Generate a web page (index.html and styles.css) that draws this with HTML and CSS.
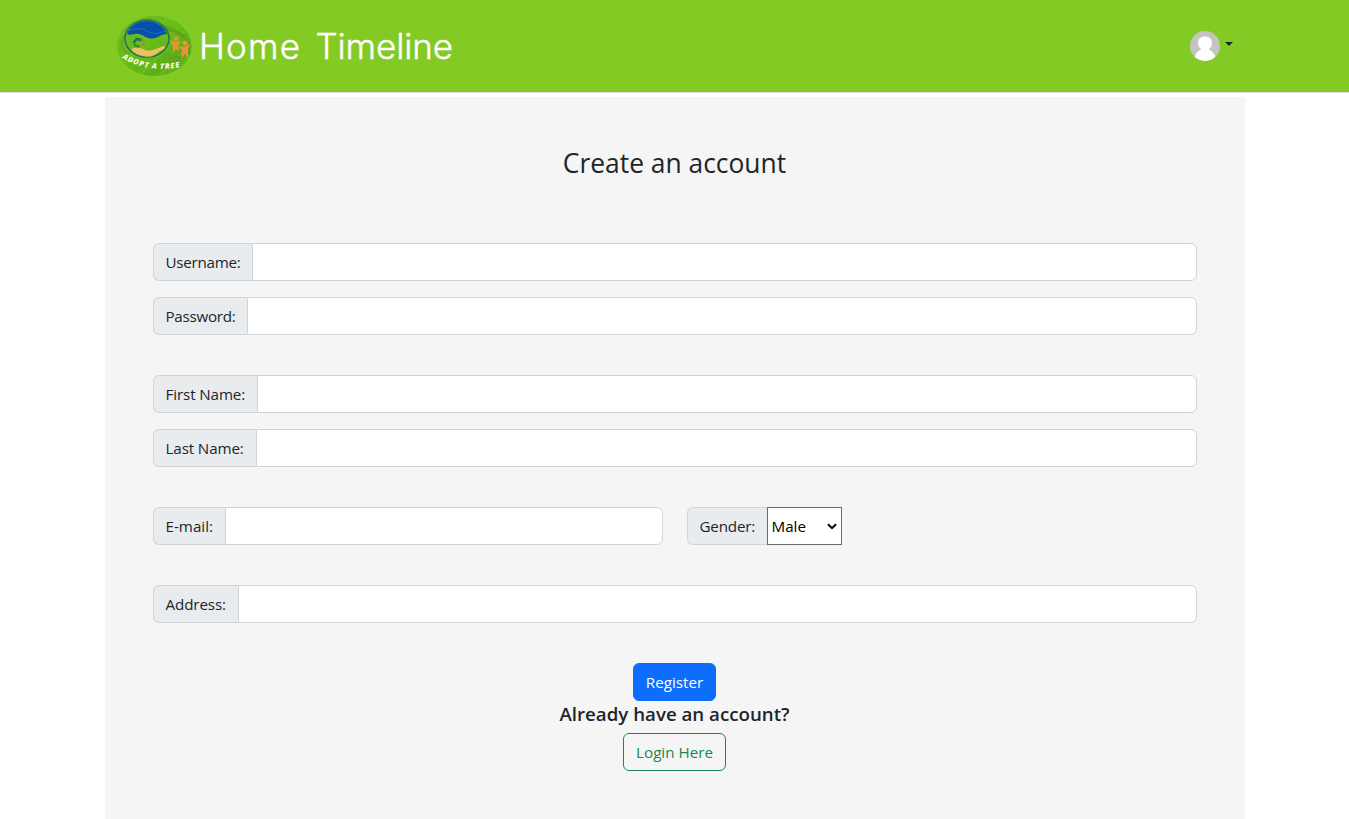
FILE: index.html
```html
<!DOCTYPE html>
<html lang="en">
<head>
<meta charset="utf-8">
<title>Create an account</title>
<link rel="stylesheet" href="styles.css">
</head>
<body>
<header class="navbar">
  <div class="nav-inner">
    <svg class="logo" width="76" height="60" viewBox="0 0 76 60" role="img" aria-label="Adopt a tree">
      <defs>
        <clipPath id="oval"><ellipse cx="37.3" cy="30" rx="37.3" ry="30"/></clipPath>
        <linearGradient id="leaf" x1="0" y1="0" x2="1" y2="1">
          <stop offset="0" stop-color="#68b82c"/><stop offset=".45" stop-color="#6abd18"/>
          <stop offset=".7" stop-color="#5cb018"/><stop offset="1" stop-color="#6abb12"/>
        </linearGradient>
        <path id="arc" d="M5 42Q32 58 65 50.500"/>
      </defs>
      <g clip-path="url(#oval)">
        <rect width="76" height="60" fill="url(#leaf)"/>
        <path d="M-2 27L25 0M-2 55L55 -2M20 62L77 5M40 62L78 24" stroke="#8bd034" stroke-width="2" opacity=".3"/>
        <path d="M48 10L68 20M45 53L75 35" stroke="#398b12" stroke-width="3" opacity=".3"/>
      </g>
      <path d="M8 18C2 28 5 35 13 38M48 13Q66 17 73 29Q72 40 52 43" fill="none" stroke="#7d8b23" stroke-width="1.2"/>
      <ellipse cx="30" cy="22.500" rx="22" ry="18.500" fill="none" stroke="#23735c" stroke-width="1.500"/>
      <path d="M10 18C13 9 21 5 30 5C40 5 48 11 50 18C43 18 41 23 34 22.500C28 22 27 19 22 18C17 17 14 20 10 18Z" fill="#064fb0"/>
      <path d="M12 15Q22 10 30 15T48 15" fill="none" stroke="#2b6b9b" stroke-width="1"/>
      <path d="M14 33.500C20 30 24 32 28 34C35 36 39 32 47 30C50 30 47 34 43 35Q35 43 26 40Q19 39 14 33.500Z" fill="#eac161"/>
      <g fill="none" stroke-width="2.500"><path d="M16.500 27l3-4 5 1" stroke="#197354"/><path d="M25.500 24l2 2-3 4" stroke="#8c963e"/><path d="M23 30.500l-4-.5-2-2" stroke="#4b852b"/></g>
      <g fill="#e89338">
        <circle cx="59" cy="22.500" r="2.200"/><path d="M53 24L58 26L65 25L61 29L62 35L59 33L56 37L56 30Z"/>
        <circle cx="68" cy="27" r="2.500"/><path d="M61 30L67 31L73 28L71 33L71 43L68 38L64 43L65 34Z"/>
      </g>
      <text class="logo-text"><textPath href="#arc" textLength="60">ADOPT A TREE</textPath></text>
    </svg>
    <nav class="links"><a class="home">Home</a><a class="timeline">Timeline</a></nav>
    <div class="profile">
      <svg width="30" height="30" viewBox="0 0 30 30"><defs><clipPath id="round"><circle cx="15" cy="15" r="15"/></clipPath></defs><g clip-path="url(#round)"><rect width="30" height="30" fill="#c4c4c4"/><path d="M15 5.500C10.500 5.500 8 8 8 12.500C8 15 9.500 17 11 18V18.500C7.500 20 5 23 4 28V30H26V28C25 23 22.500 20 19 18.500V18C20.500 17 22 15 22 12.500C22 8 19.500 5.500 15 5.500Z" fill="#fff"/></g></svg>
      <span class="caret"></span>
    </div>
  </div>
</header>
<main class="panel">
  <h1>Create an account</h1>
  <form>
    <div class="group"><label class="w-user"><span>Username:</span></label><input type="text"></div>
    <div class="group gap-large"><label class="w-pass"><span>Password:</span></label><input type="password"></div>
    <div class="group"><label class="w-first"><span>First Name:</span></label><input type="text"></div>
    <div class="group gap-large"><label class="w-last"><span>Last Name:</span></label><input type="text"></div>
    <div class="row gap-large">
      <div class="group"><label class="w-mail"><span>E-mail:</span></label><input type="text"></div>
      <div class="group"><label class="w-gender"><span>Gender:</span></label><div class="select"><span>Male</span><svg width="10" height="7" viewBox="0 0 10 7"><path d="M1 1.200L5 5.200L9 1.200" fill="none" stroke="#000" stroke-width="2"/></svg></div></div>
    </div>
    <div class="group gap-large"><label class="w-address"><span>Address:</span></label><input type="text"></div>
    <div class="actions">
      <button class="btn register" type="button">Register</button>
      <h2>Already have an account?</h2>
      <button class="btn login" type="button">Login Here</button>
    </div>
  </form>
</main>
</body>
</html>
```
FILE: styles.css
```css
* { box-sizing: border-box; }
html { height: 100%; overflow: hidden; }
body { margin: 0; height: 100%; background: #fff; color: #212529; font: 15.2px/24px "Open Sans", "Noto Sans", sans-serif; overflow: hidden; }
.navbar { height: 93px; background: #84ca24; border-bottom: 1px solid #dee2e6; }
.nav-inner { width: 1140px; height: 92px; margin: 0 auto; padding-left: 12px; padding-right: 12px; display: flex; align-items: center; }
.logo { display: block; }
.logo-text { font: italic 800 7.5px "Open Sans", sans-serif; fill: #f3f9e7; }
.links { display: flex; align-items: center; height: 50px; color: #fff; font: 300 35px/50px Inter, sans-serif; -webkit-text-stroke: .4px #fff; }
.links a { white-space: nowrap; }
.home { width: 118px; padding-left: 6.5px; letter-spacing: 1.2px; }
.timeline { padding-left: 5px; letter-spacing: -.15px; }
.profile { margin-left: auto; display: flex; align-items: center; gap: 5px; }
.profile svg { display: block; }
.caret { border-top: 4px solid #212529; border-left: 4px solid transparent; border-right: 4px solid transparent; margin-bottom: 4px; }
.panel { width: 1140px; height: 730px; margin: 4px auto 0; padding: 49px 48px 0; background: #f5f5f5; }
h1 { margin: 0 0 63px; font-size: 26.4px; font-weight: 400; line-height: 34px; text-align: center; }
.group { display: flex; height: 38px; margin-bottom: 16px; }
.group.gap-large, .row.gap-large { margin-bottom: 40px; }
label { display: flex; align-items: center; flex: none; padding-left: 12px; border: 1px solid #ced4da; border-right: 0; border-radius: 6px 0 0 6px; background: #e9ecef; white-space: nowrap; }
input { flex: 1; min-width: 0; border: 1px solid #ced4da; border-radius: 0 6px 6px 0; background: #fff; padding: 6px 12px; font: inherit; }
.w-user { width: 99px; letter-spacing: -.27px; }
.w-pass { width: 94px; letter-spacing: -.27px; }
.w-first { width: 104px; letter-spacing: -.12px; }
.w-last { width: 103px; letter-spacing: -.12px; }
.w-mail { width: 72px; }
.w-gender { width: 80px; letter-spacing: -.2px; }
.w-address { width: 85px; letter-spacing: -.12px; }
.row { display: grid; grid-template-columns: 510px 155px; gap: 24px; }
.row .group { margin: 0; }
.select { width: 75px; display: flex; align-items: center; justify-content: space-between; padding: 0 4px; background: #fff; border: 1px solid #6b6b6b; color: #000; }
.actions { display: flex; flex-direction: column; align-items: center; }
.btn { height: 38px; padding: 0; border-radius: 6px; font: inherit; white-space: nowrap; }
.register { width: 83px; border: 1px solid #0d6efd; background: #0d6efd; color: #fff; }
.login { width: 103px; border: 1px solid #198754; background: transparent; color: #198754; }
h2 { margin: 1px 0 7px; font-size: 18.7px; font-weight: 600; line-height: 24px; }
```
